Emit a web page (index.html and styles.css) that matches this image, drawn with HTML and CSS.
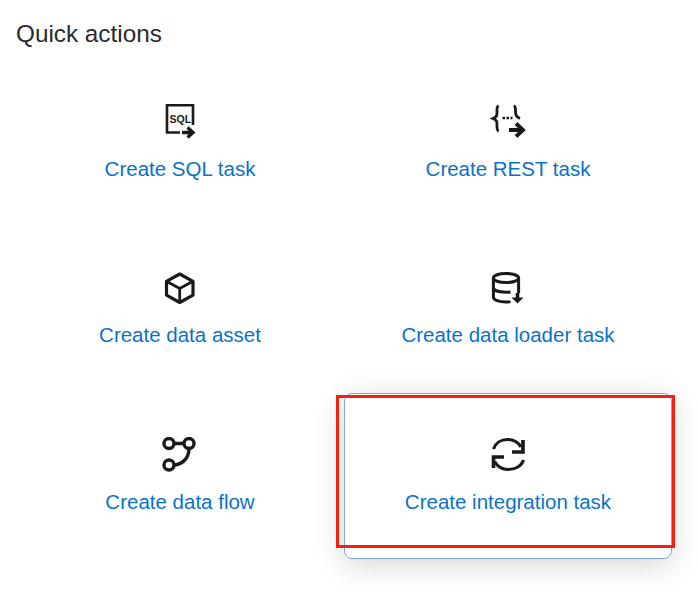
FILE: index.html
```html
<!DOCTYPE html>
<html lang="en">
<head>
<meta charset="utf-8">
<title>Quick actions</title>
<link rel="stylesheet" href="styles.css">
</head>
<body>
<main class="panel">
  <h2 class="title">Quick actions</h2>
  <div class="grid">
    <a class="action" href="#">
      <svg class="icon" viewBox="0 0 36 36" fill="none" stroke="#1a1a1a" stroke-width="2.600">
        <path d="M31 21V1.300H5V28.500h13"/>
        <text class="sql" x="7.600" y="19">SQL</text>
        <path d="M20 28.500h11M25.500 23.500l5.500 5-5.500 5" stroke-width="3.400"/>
      </svg>
      <span>Create SQL task</span>
    </a>
    <a class="action" href="#">
      <svg class="icon" viewBox="0 0 36 36" fill="none" stroke="#1a1a1a" stroke-width="2.800">
        <path d="M8.500 1.500C6.500 3 7 5 7 8s0 5-4 6.500c4 1.500 4 3.500 4 6.500s-.5 5 1.500 6.500"/>
        <path d="M24 1.500c2 1.500 1.500 3.500 1.500 6.500 0 3 .5 5 4.500 6.500"/>
        <path d="M12.500 14h2.500M16.500 14h2.500M20.500 14h2" stroke-width="2.400"/>
        <path d="M19 26h14M26 19.500l7 6.500-7 6.500" stroke-width="3.800"/>
      </svg>
      <span>Create REST task</span>
    </a>
    <a class="action" href="#">
      <svg class="icon" viewBox="0 0 36 36" fill="none" stroke="#1a1a1a" stroke-width="3.200" stroke-linejoin="round">
        <path d="M17.700 4 31 11.300V25.200L17.700 32.500 4.500 25.200V11.300z"/>
        <path d="M4.500 11.300 17.700 18.500 31 11.300M17.700 18.500V32.500" stroke-width="2.800"/>
      </svg>
      <span>Create data asset</span>
    </a>
    <a class="action" href="#">
      <svg class="icon" viewBox="0 0 36 36" fill="none" stroke="#1a1a1a" stroke-width="3">
        <ellipse cx="16" cy="8" rx="12.600" ry="4.600"/>
        <path d="M3.400 8v19c0 3 5.600 5 12.600 5 2 0 3-.1 4.500-.4M28.600 8v15M3.400 17.500c0 3 5.600 4.700 12.600 4.700 2 0 3-.1 4.500-.3"/>
        <path d="M27.500 23v6" stroke-width="3.600"/>
        <path d="M21.500 27.500h12l-6 6z" fill="#1a1a1a" stroke="none"/>
      </svg>
      <span>Create data loader task</span>
    </a>
    <a class="action" href="#">
      <svg class="icon" viewBox="0 0 36 36" fill="none" stroke="#1a1a1a" stroke-width="3.400">
        <circle cx="7" cy="6.500" r="5"/>
        <circle cx="27" cy="6.500" r="5"/>
        <circle cx="7" cy="28" r="5"/>
        <path d="M12 6.500h10M27 11.500c0 9-5.500 15.500-15 16.500"/>
      </svg>
      <span>Create data flow</span>
    </a>
    <a class="action action-active" href="#">
      <svg class="icon" viewBox="0 0 36 36" fill="none" stroke="#1a1a1a" stroke-width="3.200">
        <path d="M3.500 12C5.500 6 11 2.500 17.500 2.500c6 0 10.500 2.500 13.500 7.500"/>
        <path d="M33.500 23c-2 6-8 9.500-15.500 9.500-6 0-10.500-3-13.500-8"/>
        <path d="M33 3v12H22" stroke-width="3.600"/>
        <path d="M3.500 31V20H14" stroke-width="3.600"/>
      </svg>
      <span>Create integration task</span>
    </a>
  </div>
  <div class="annotation"></div>
</main>
</body>
</html>
```

FILE: styles.css
```css
* {
  box-sizing: border-box;
}

body {
  margin: 0;
  background: #fff;
  font-family: "Liberation Sans", Arial, sans-serif;
}

.panel {
  position: relative;
  width: 698px;
  height: 596px;
  padding: 20px 26px 0 16px;
  overflow: hidden;
}

.title {
  margin: 0;
  height: 40px;
  font-size: 24.300px;
  line-height: 27px;
  font-weight: 400;
  color: #2b2b2b;
}

.grid {
  display: grid;
  grid-template-columns: 328px 328px;
  grid-template-rows: 166px 167px 166px;
}

.action {
  display: flex;
  flex-direction: column;
  align-items: center;
  padding-top: 43px;
  border: 1px solid transparent;
  border-radius: 8px;
  color: #0a72c9;
  font-size: 20.500px;
  line-height: 24px;
  text-decoration: none;
}

.action-active {
  border-color: #7fa9df;
  box-shadow: 0 6px 30px rgba(0, 0, 0, 0.17);
}

.icon {
  width: 36px;
  height: 36px;
  margin-bottom: 17px;
}

.sql {
  font-family: "Liberation Sans", Arial, sans-serif;
  font-size: 10.500px;
  font-weight: 700;
  fill: #1a1a1a;
  stroke: none;
}

.annotation {
  position: absolute;
  left: 336px;
  top: 395px;
  width: 339px;
  height: 153px;
  border: 3px solid #f4200f;
}
```
